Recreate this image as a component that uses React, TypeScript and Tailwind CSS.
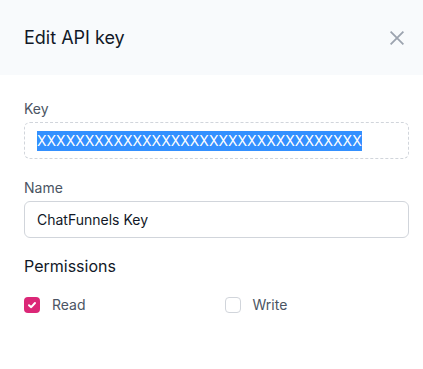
import React from "react";

export default function App() {
  return (
    <div className="w-[423px] h-[369px] bg-white" style={{ fontFamily: "Inter, 'Noto Sans', sans-serif" }}>
      <div className="h-[75px] bg-[#f8fafc] flex items-center justify-between pl-6 pr-[19px]">
        <h2 className="text-lg text-[#111827] leading-7">Edit API key</h2>
        <svg width="14" height="14" viewBox="0 0 14 14" className="text-[#9ca3af]" fill="none" stroke="currentColor" strokeWidth="1.8">
          <path d="M0.6 0.6 L13.4 13.4 M13.4 0.6 L0.6 13.4" />
        </svg>
      </div>
      <div className="pl-6 pr-[14px] pt-[24px]">
        <label className="block text-sm text-[#4b5563] leading-5">Key</label>
        <div className="mt-[3px] h-[37px] border border-dashed border-[#d1d5db] rounded-md flex items-center px-[12px]">
          <span className="text-sm leading-5 bg-[#3390ff] text-white">XXXXXXXXXXXXXXXXXXXXXXXXXXXXXXXXXX</span>
        </div>
        <label className="block text-sm text-[#4b5563] leading-5 mt-[19px]">Name</label>
        <div className="mt-[3px] h-[37px] border border-[#d1d5db] rounded-md flex items-center px-[12px]">
          <span className="text-sm leading-5 text-[#111827]">ChatFunnels Key</span>
        </div>
        <h3 className="text-base text-[#111827] leading-6 mt-[16px]">Permissions</h3>
        <div className="grid grid-cols-2 mt-[17px]">
          <div className="flex items-center gap-3">
            <div className="w-4 h-4 rounded bg-[#db2777] flex items-center justify-center">
              <svg width="10" height="10" viewBox="0 0 10 10" fill="none" stroke="white" strokeWidth="2" strokeLinecap="round" strokeLinejoin="round">
                <path d="M2 5.2 L4.2 7.2 L8 3" />
              </svg>
            </div>
            <span className="text-sm text-[#4b5563] leading-5">Read</span>
          </div>
          <div className="flex items-center gap-3 ml-[8px]">
            <div className="w-4 h-4 rounded border border-[#d1d5db] bg-white" />
            <span className="text-sm text-[#4b5563] leading-5">Write</span>
          </div>
        </div>
      </div>
    </div>
  );
}
